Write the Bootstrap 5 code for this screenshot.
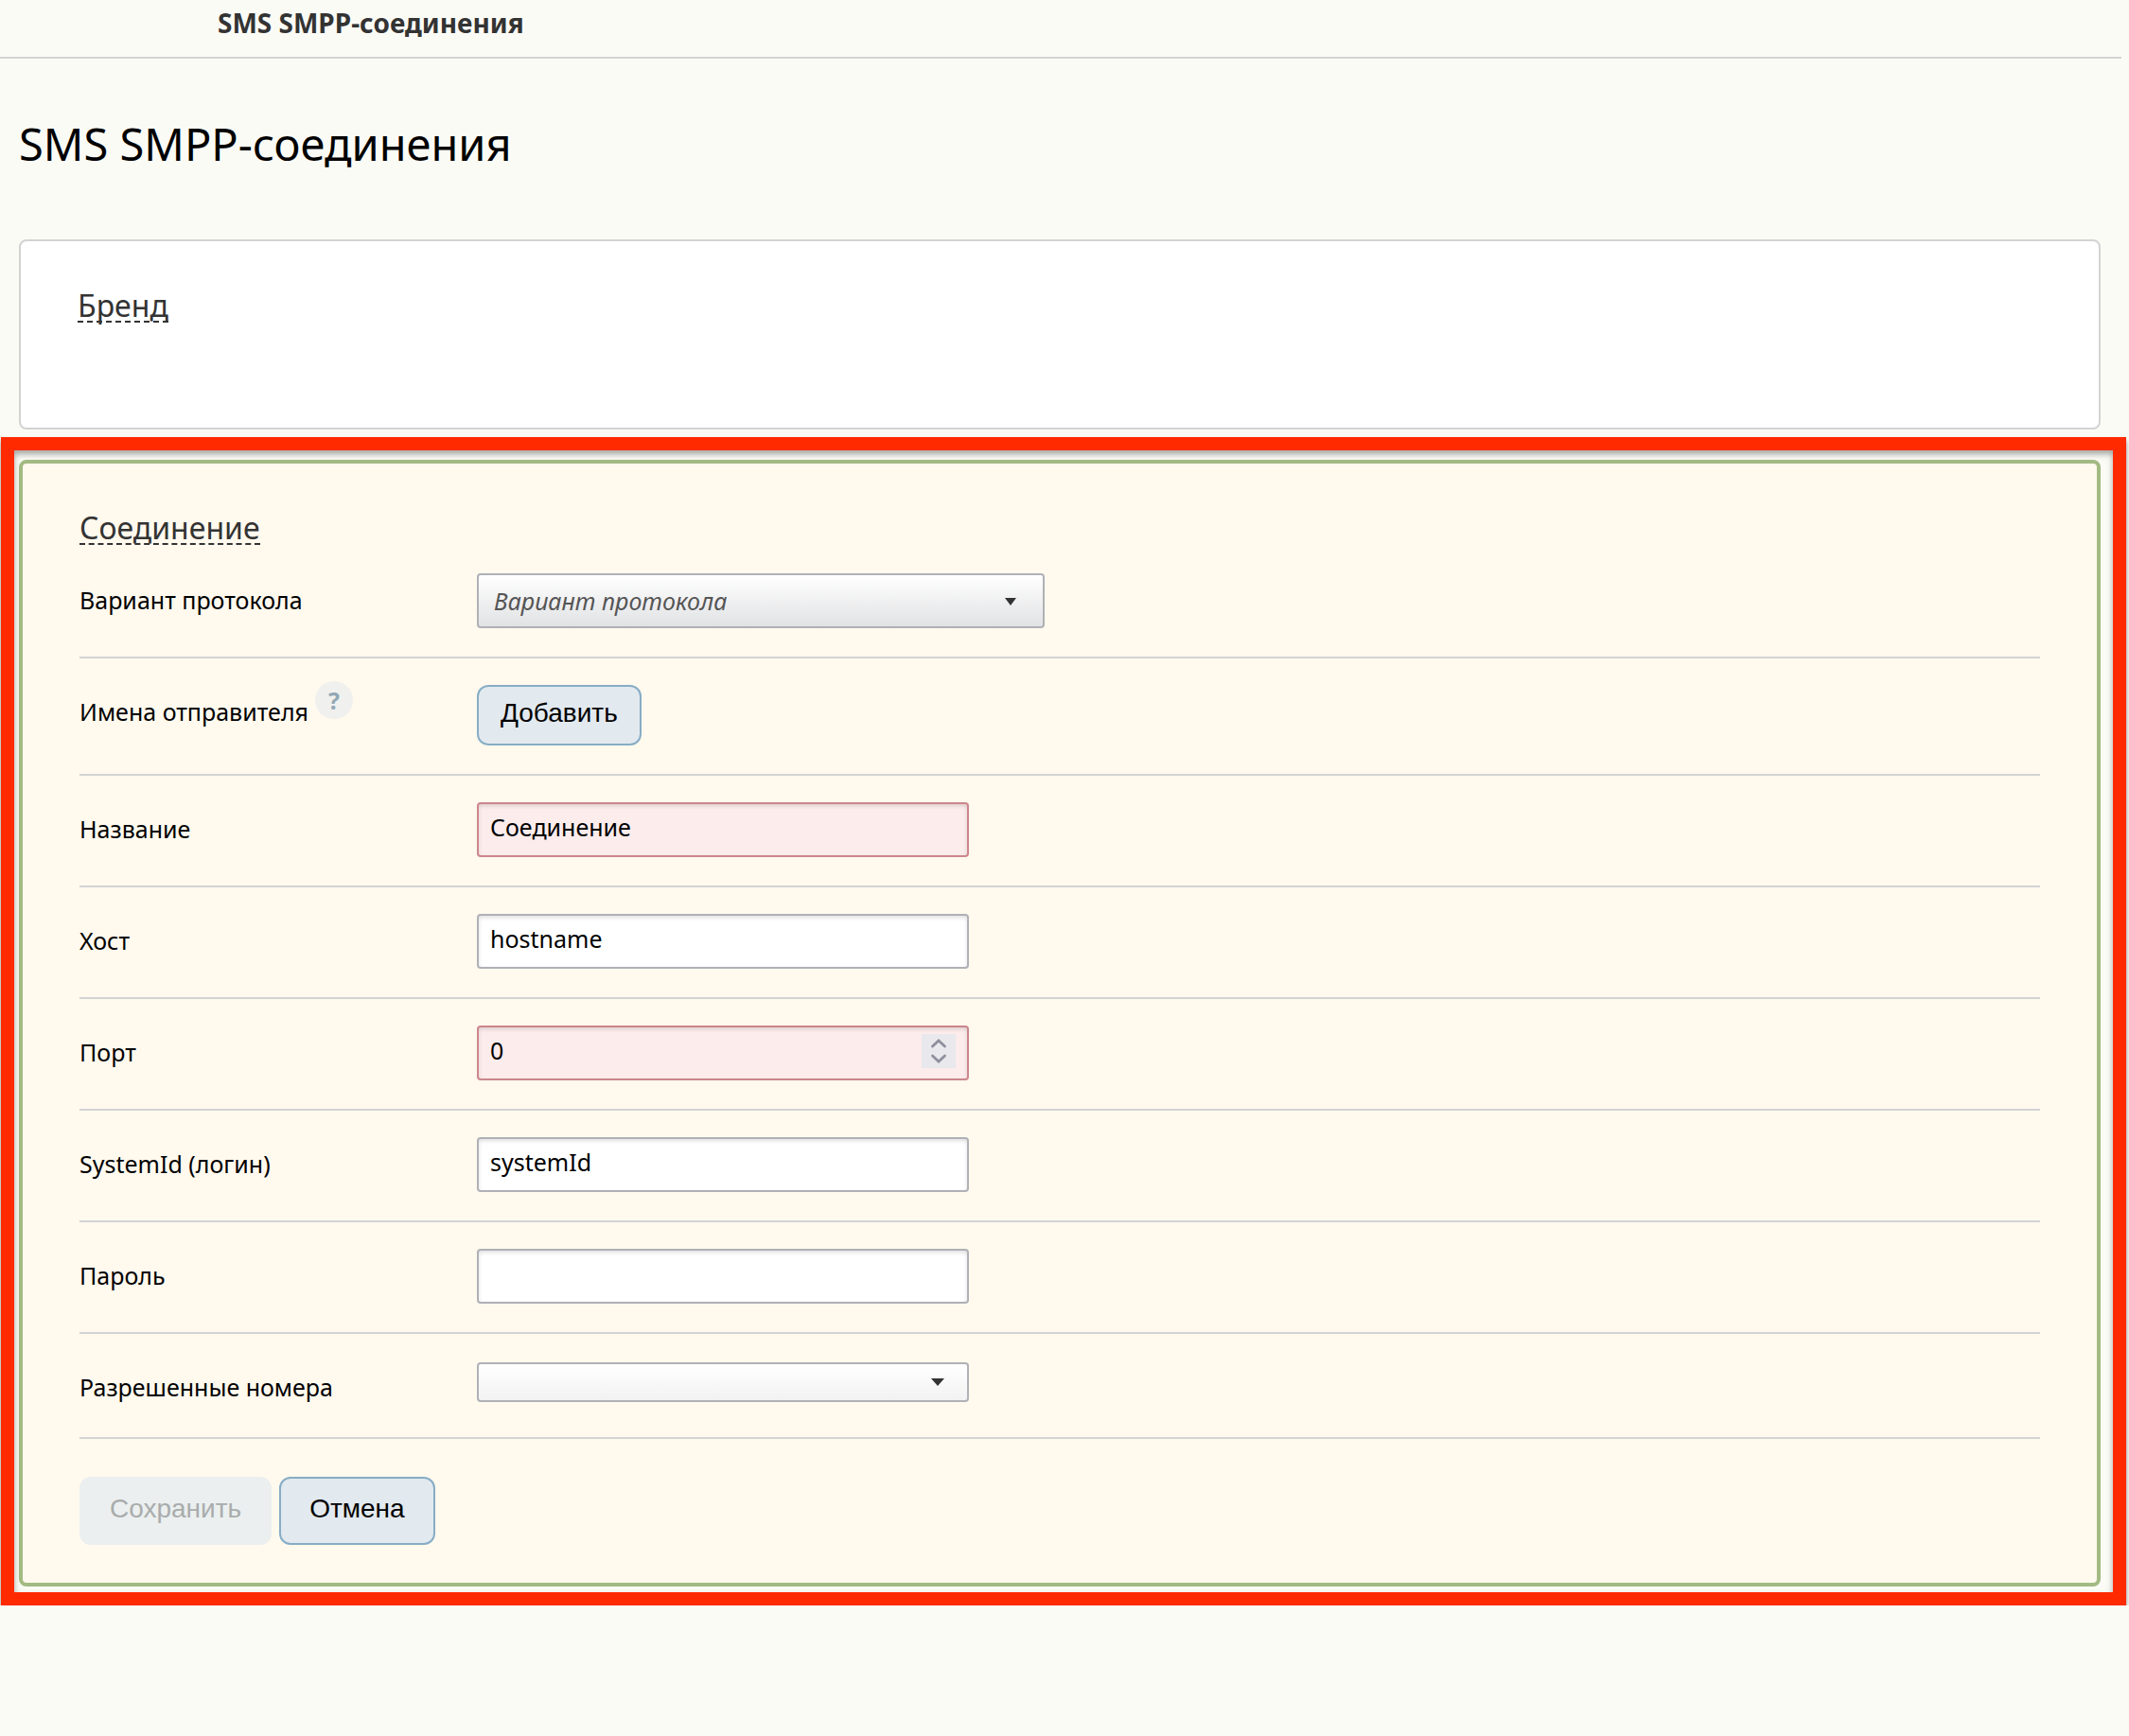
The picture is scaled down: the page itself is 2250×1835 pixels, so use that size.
<!DOCTYPE html>
<html lang="ru">
<head>
<meta charset="utf-8">
<meta name="viewport" content="width=device-width, initial-scale=1">
<title>SMS SMPP-соединения</title>
<link href="https://cdn.jsdelivr.net/npm/bootstrap@5.3.0/dist/css/bootstrap.min.css" rel="stylesheet">
<style>
  body { background: #fbfbf6; color: #000; font: 25px/40px "Noto Sans", sans-serif; }
  .topline { margin-right: 8px; padding: 4px 230px 16px; border-bottom: 2px solid #d3d3d5; color: #333; font-size: 28px; font-weight: 700; }
  .page-title { margin: 55px 20px 65px; font-size: 47px; line-height: 71px; font-weight: 400; }
  .panel { background: #fff; border: 2px solid #d3d3d3; border-radius: 8px; }
  .brand-panel { margin: 0 30px 8px 20px; padding: 52px 60px 111px; }
  .panel-title { width: fit-content; margin: 0 0 2px; border-bottom: 2px dashed #333; color: #333; font-size: 32px; line-height: 32px; font-weight: 400; }
  .marked { margin: 0 3px 0 1px; padding: 10px 13px 6px 5px; border: 14px solid #ff2a00; box-shadow: 0 4px 5px rgba(0,0,0,.45), inset 0 4px 6px rgba(0,0,0,.35); }
  .edit-panel { background: #fff9ee; border: 4px solid #a2ba82; border-radius: 8px; padding: 52px 60px 40px; }
  .line { display: flex; align-items: flex-start; padding: 28px 0 30px; border-bottom: 2px solid #d3d3d5; }
  .line > .caption { flex: 0 0 420px; padding-top: 8px; white-space: nowrap; }
  .last-line { padding-bottom: 33px; }
  .numbers-box { padding-top: 2px; }
  .field { width: 520px; height: 58px; padding: 0 12px 6px; border: 2px solid #afb1b6; border-radius: 4px; background: #fff; color: #000; font: inherit; box-shadow: inset 0 2px 4px rgba(0,0,0,.13); -moz-appearance: textfield; appearance: textfield; }
  .field::-webkit-inner-spin-button { display: none; }
  .field.wrong { background: #fcecec; border-color: #cc868c; }
  .pick { appearance: none; border: 2px solid #afb1b6; border-radius: 4px; font: inherit; }
  .pick-protocol { width: 600px; height: 58px; padding: 0 16px; font-style: italic; background: linear-gradient(#fff, #e1e2e4); color: #555; }
  .pick-numbers { width: 520px; height: 42px; background: linear-gradient(#fff, #f2f2f2); }
  .arrow { right: 30px; top: 50%; margin-top: -3px; pointer-events: none; }
  .arrow-wide { right: 26px; }
  .spin { right: 14px; top: 9px; pointer-events: none; }
  .help { width: 40px; height: 40px; margin: -12px 0 0 7px; border: 0; border-radius: 50%; padding: 0; background: #f0f1ee; color: #93a8b5; font-size: 25px; line-height: 40px; font-weight: 700; }
  .act { height: 72px; padding: 0 30px 4px; border: 2px solid #87adc5; border-radius: 12px; background: #e2e9ef; color: #000; font: 28px/40px "Liberation Sans", sans-serif; }
  .act-add { height: 64px; padding: 0 23px 4px; }
  .act:disabled { background: #ebefef; border-color: #ebefef; color: #a9acac; }
</style>
</head>
<body>
<header class="topline">SMS SMPP-соединения</header>
<main>
  <h1 class="page-title">SMS SMPP-соединения</h1>
  <section class="panel brand-panel">
    <h2 class="panel-title mb-0">Бренд</h2>
  </section>
  <div class="marked">
    <form class="edit-panel">
      <h2 class="panel-title">Соединение</h2>
      <div class="line">
        <label class="caption" for="protocol">Вариант протокола</label>
        <div class="position-relative">
          <select class="pick pick-protocol d-block" id="protocol"><option>Вариант протокола</option></select>
          <svg class="arrow position-absolute" width="12" height="8" viewBox="0 0 12 8"><path d="M0 0h12L6 8z" fill="#333"/></svg>
        </div>
      </div>
      <div class="line">
        <div class="caption d-flex align-items-start"><span>Имена отправителя</span><button type="button" class="help">?</button></div>
        <button type="button" class="act act-add">Добавить</button>
      </div>
      <div class="line">
        <label class="caption" for="title">Название</label>
        <input class="field wrong" id="title" type="text" value="Соединение">
      </div>
      <div class="line">
        <label class="caption" for="host">Хост</label>
        <input class="field" id="host" type="text" value="hostname">
      </div>
      <div class="line">
        <label class="caption" for="port">Порт</label>
        <div class="position-relative">
          <input class="field wrong d-block" id="port" type="number" value="0">
          <svg class="spin position-absolute" width="36" height="36" viewBox="0 0 36 36"><path d="M0 0h36v36H0z" fill="#e8e8ed"/><path d="M11.500 13L18 7l6.500 6M11.500 23l6.500 6 6.500-6" fill="none" stroke="#8f8f9d" stroke-width="2.800" stroke-linecap="round"/></svg>
        </div>
      </div>
      <div class="line">
        <label class="caption" for="login">SystemId (логин)</label>
        <input class="field" id="login" type="text" value="systemId">
      </div>
      <div class="line">
        <label class="caption" for="secret">Пароль</label>
        <input class="field" id="secret" type="password">
      </div>
      <div class="line last-line">
        <label class="caption" for="numbers">Разрешенные номера</label>
        <div class="position-relative numbers-box">
          <select class="pick pick-numbers d-block" id="numbers"><option></option></select>
          <svg class="arrow arrow-wide position-absolute" width="14" height="8" viewBox="0 0 14 8"><path d="M0 0h14L7 8z" fill="#333"/></svg>
        </div>
      </div>
      <div class="d-flex gap-2 pt-4 mt-3">
        <button type="submit" class="act" disabled>Сохранить</button>
        <button type="button" class="act">Отмена</button>
      </div>
    </form>
  </div>
</main>
<script src="https://cdn.jsdelivr.net/npm/bootstrap@5.3.0/dist/js/bootstrap.bundle.min.js"></script>
</body>
</html>
